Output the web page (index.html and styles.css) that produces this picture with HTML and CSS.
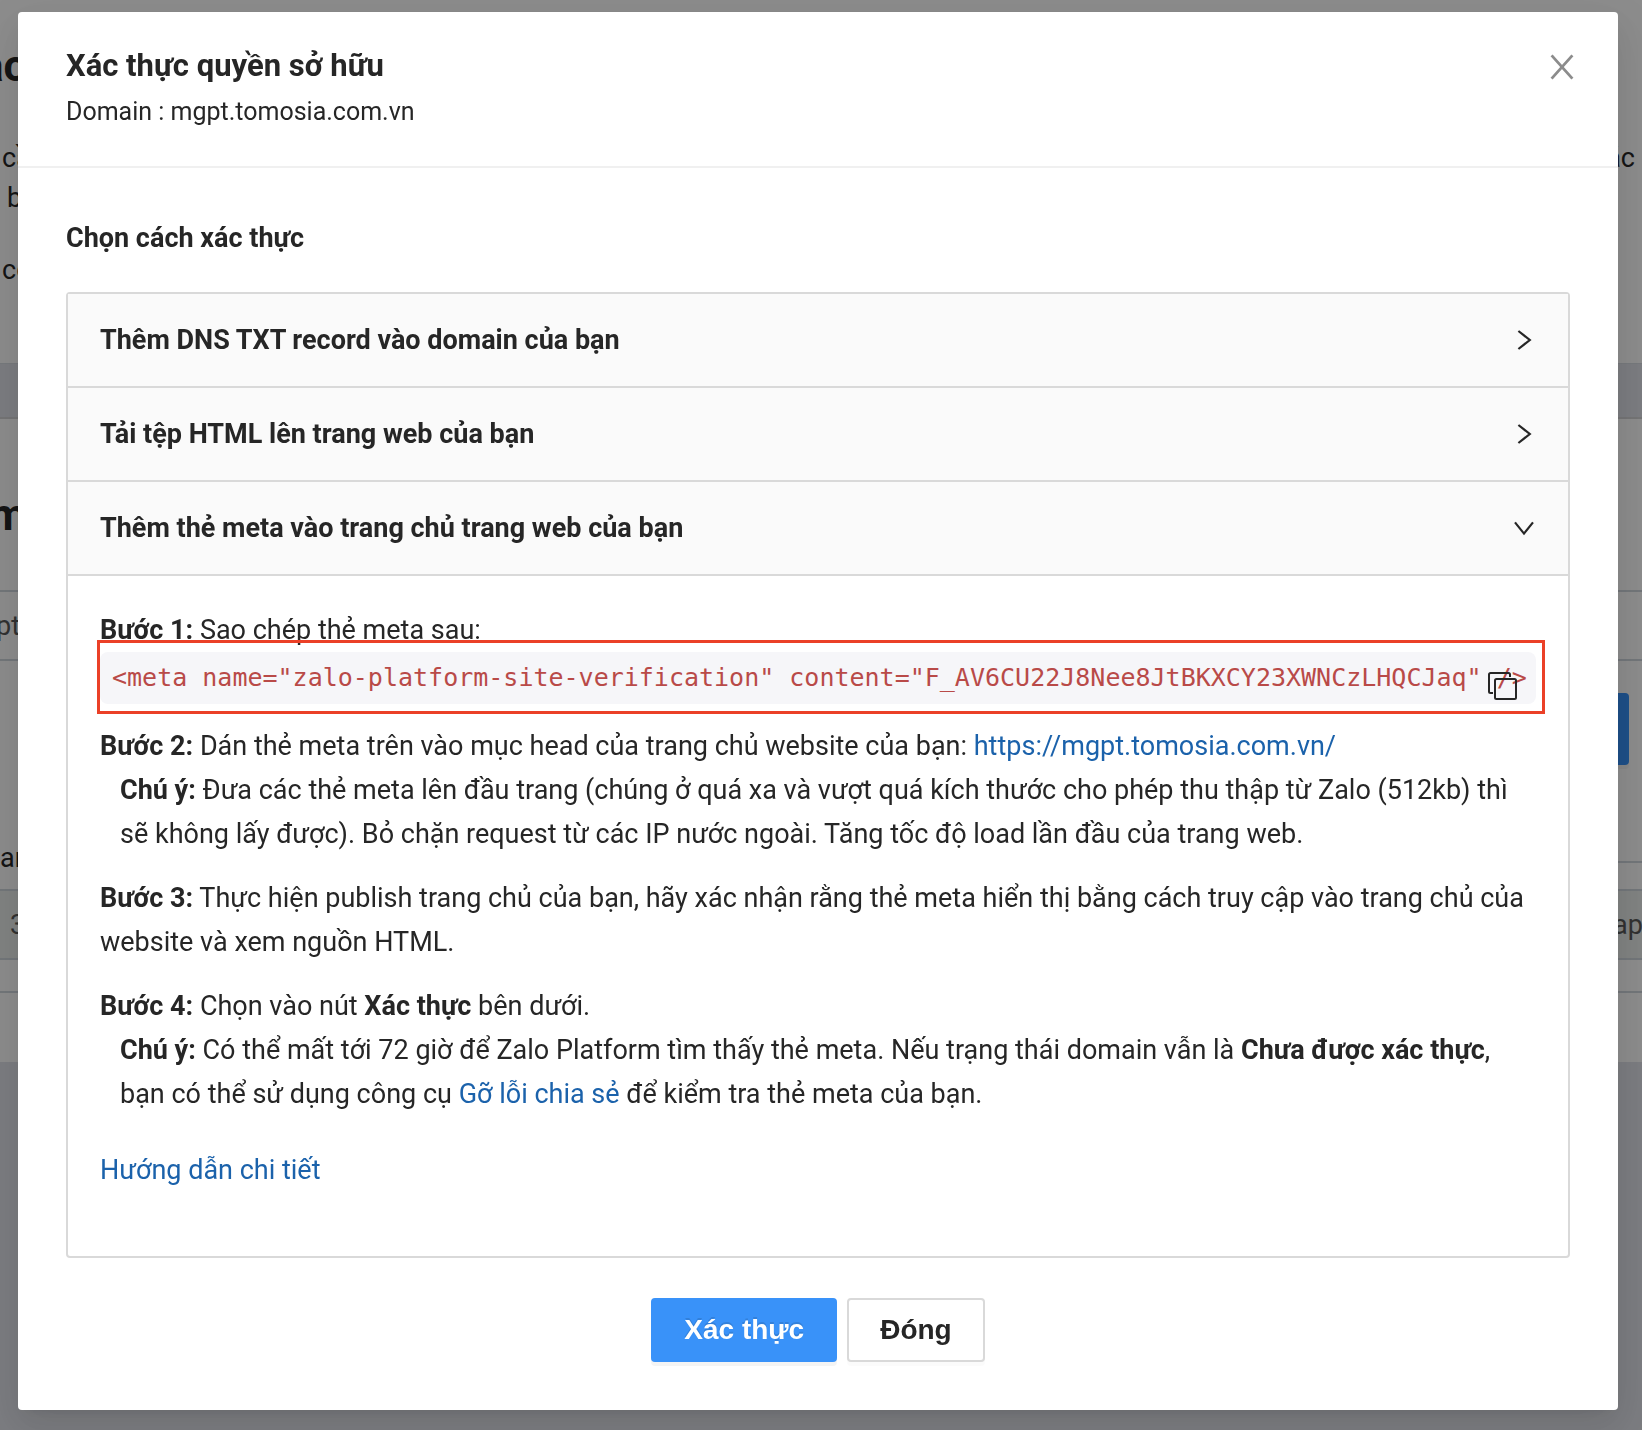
FILE: index.html
```html
<!DOCTYPE html>
<html lang="vi">
<head>
<meta charset="utf-8">
<meta name="viewport" content="width=device-width, initial-scale=1">
<title>Xác thực quyền sở hữu</title>
<link rel="stylesheet" href="styles.css">
</head>
<body>
<div class="page" aria-hidden="true">
  <section class="intro">
    <div class="page-title">ac</div>
    <div class="intro-row"><span>cần</span><span>các</span></div>
    <div class="intro-row intro-row-indent"><span>b</span></div>
    <div class="intro-row intro-row-spaced"><span>co</span></div>
  </section>
  <div class="band"></div>
  <section class="domains">
    <div class="page-title domains-title">m</div>
    <div class="field field-domain">pt</div>
    <div class="action-row"><div class="page-action"></div></div>
    <div class="label-row"><span>an</span><span class="label-rule"></span></div>
    <div class="field field-filled"><span>3</span><span class="field-end">app</span></div>
    <div class="domains-footer"></div>
  </section>
</div>

<div class="mask">
  <div class="modal" role="dialog" aria-modal="true" aria-labelledby="modal-title">
    <header class="modal-header">
      <div>
        <h1 class="modal-title" id="modal-title">Xác thực quyền sở hữu</h1>
        <p class="modal-domain">Domain : mgpt.tomosia.com.vn</p>
      </div>
      <button class="close" type="button" aria-label="Đóng hộp thoại">
        <svg viewBox="0 0 32 32" width="32" height="32" fill="none" stroke="currentColor" stroke-width="2.8"><path d="M5.600 4.400 26.400 27.600M26.400 4.400 5.600 27.600"/></svg>
      </button>
    </header>

    <div class="modal-body">
      <h2 class="section-title">Chọn cách xác thực</h2>

      <div class="collapse">
        <h3 class="collapse-header">
          <button type="button" class="collapse-toggle" aria-expanded="false">Thêm DNS TXT record vào domain của bạn
            <svg viewBox="0 0 24 24" width="24" height="24" fill="none" stroke="currentColor" stroke-width="2.2"><path d="M6.400 3 17.800 12 6.400 21"/></svg>
          </button>
        </h3>
        <h3 class="collapse-header">
          <button type="button" class="collapse-toggle" aria-expanded="false">Tải tệp HTML lên trang web của bạn
            <svg viewBox="0 0 24 24" width="24" height="24" fill="none" stroke="currentColor" stroke-width="2.2"><path d="M6.400 3 17.800 12 6.400 21"/></svg>
          </button>
        </h3>
        <h3 class="collapse-header">
          <button type="button" class="collapse-toggle" aria-expanded="true" aria-controls="meta-panel">Thêm thẻ meta vào trang chủ trang web của bạn
            <svg viewBox="0 0 24 24" width="24" height="24" fill="none" stroke="currentColor" stroke-width="2.2"><path d="M3 6.400 12 17.600 21 6.400"/></svg>
          </button>
        </h3>
        <div class="panel" id="meta-panel">
          <div class="step">
            <p><strong>Bước 1:</strong> Sao chép thẻ meta sau:</p>
            <div class="snippet">
              <code>&lt;meta name="zalo-platform-site-verification" content="F_AV6CU22J8Nee8JtBKXCY23XWNCzLHQCJaq" /&gt;</code>
              <button class="copy" type="button" aria-label="Sao chép">
                <svg viewBox="0 0 32 32" width="32" height="32" fill="none" stroke="currentColor" stroke-width="2"><rect x="9" y="9" width="21" height="20" rx="1.500"/><path d="M7 23H4.500a1.500 1.500 0 0 1-1.500-1.500V4.500A1.500 1.500 0 0 1 4.500 3H22.500A1.500 1.500 0 0 1 24 4.500V7"/></svg>
              </button>
              <span class="highlight"></span>
            </div>
          </div>
          <div class="step">
            <p><strong>Bước 2:</strong> Dán thẻ meta trên vào mục head của trang chủ website của bạn: <a href="https://mgpt.tomosia.com.vn/">https://mgpt.tomosia.com.vn/</a></p>
            <p class="note"><strong>Chú ý:</strong> Đưa các thẻ meta lên đầu trang (chúng ở quá xa và vượt quá kích thước cho phép thu thập từ Zalo (512kb) thì sẽ không lấy được). Bỏ chặn request từ các IP nước ngoài. Tăng tốc độ load lần đầu của trang web.</p>
          </div>
          <div class="step">
            <p><strong>Bước 3:</strong> Thực hiện publish trang chủ của bạn, hãy xác nhận rằng thẻ meta hiển thị bằng cách truy cập vào trang chủ của website và xem nguồn HTML.</p>
          </div>
          <div class="step">
            <p><strong>Bước 4:</strong> Chọn vào nút <strong>Xác thực</strong> bên dưới.</p>
            <p class="note"><strong>Chú ý:</strong> Có thể mất tới 72 giờ để Zalo Platform tìm thấy thẻ meta. Nếu trạng thái domain vẫn là <strong>Chưa được xác thực</strong>, bạn có thể sử dụng công cụ <a href="#debug">Gỡ lỗi chia sẻ</a> để kiểm tra thẻ meta của bạn.</p>
          </div>
          <p class="guide"><a href="#guide">Hướng dẫn chi tiết</a></p>
        </div>
      </div>

      <div class="actions">
        <button class="btn btn-primary" type="button">Xác thực</button>
        <button class="btn" type="button">Đóng</button>
      </div>
    </div>
  </div>
</div>
</body>
</html>
```
FILE: styles.css
```css
* { box-sizing: border-box; }

body,
h1, h2, h3, p { margin: 0; }

body {
  height: 100vh;
  overflow: hidden;
  background: #e1e3ea;
  color: #262626;
  font-family: Roboto, "Liberation Sans", sans-serif;
  font-size: 27px;
  line-height: 44px;
}

button {
  font: inherit;
  color: inherit;
  cursor: pointer;
}

svg { display: block; flex: none; }

a { color: #1b62ab; text-decoration: none; }

/* Page behind the dialog */
.page { line-height: 40px; overflow: hidden; }

.intro {
  padding: 36px 7px 73px 2px;
  background: #fff;
}

.page-title {
  margin: 0 0 42px -22px;
  font-size: 44px;
  font-weight: 700;
  line-height: 60px;
}

.intro-row { display: flex; justify-content: space-between; }
.intro-row-indent { padding-left: 5px; }
.intro-row-spaced { margin-top: 32px; }

.band {
  height: 56px;
  border-top: 1px solid #d8dde3;
  border-bottom: 2px solid #d4d4d6;
}

.domains { padding-top: 66px; background: #fff; }
.domains-title { margin: 0 0 45px -11px; }

.field {
  display: flex;
  justify-content: space-between;
  padding: 14px 0 13px;
  border: solid #d0d7de;
  border-width: 2px 0;
  color: #595959;
}

.field-domain { text-indent: -4px; }
.field-filled { padding-left: 10px; background: #eaeeec; }
.field-end { margin-right: -16px; }

.action-row {
  display: flex;
  justify-content: flex-end;
  padding: 32px 13px 73px;
}

.page-action {
  width: 160px;
  height: 72px;
  border-radius: 4px;
  background: #3691f8;
  box-shadow: 0 4px 0 rgba(0, 0, 0, 0.04);
}

.label-row {
  display: flex;
  justify-content: space-between;
  align-items: flex-end;
  padding-bottom: 11px;
}

.label-rule {
  width: 50%;
  height: 17px;
  border-top: 2px solid #d0d7de;
}

.domains-footer {
  height: 71px;
  margin-top: 31px;
  border-top: 2px solid #d0d7de;
}

/* Dialog */
.mask {
  position: fixed;
  inset: 0;
  overflow: auto;
  padding: 12px 24px 20px 18px;
  background: rgba(0, 0, 0, 0.45);
}

.modal {
  border-radius: 4px;
  background: #fff;
  box-shadow:
    0 6px 12px -8px rgba(0, 0, 0, 0.12),
    0 12px 32px rgba(0, 0, 0, 0.08),
    0 18px 56px 16px rgba(0, 0, 0, 0.05);
}

.modal-header {
  display: flex;
  justify-content: space-between;
  align-items: flex-start;
  padding: 32px 40px 30px 48px;
  border-bottom: 2px solid #f0f0f0;
}

.modal-title { font-size: 31px; font-weight: 700; line-height: 44px; }
.modal-domain { font-size: 25px; line-height: 48px; }

.close {
  display: flex;
  align-items: center;
  height: 46px;
  padding: 0;
  border: 0;
  background: none;
  color: #8c8c8c;
}

.modal-body { padding: 48px; }

.section-title {
  margin-bottom: 32px;
  font-size: 27px;
  font-weight: 700;
}

.collapse {
  border: 2px solid #d9d9d9;
  border-radius: 4px;
}

.collapse-header {
  border-bottom: 2px solid #d9d9d9;
  background: #fafafa;
  font-size: 27px;
  font-weight: 700;
}

.collapse-toggle {
  display: flex;
  justify-content: space-between;
  align-items: center;
  width: 100%;
  padding: 24px 32px;
  border: 0;
  background: none;
  text-align: left;
}

.panel { padding: 32px 32px 64px; }

.step { margin-bottom: 20px; }
.note { padding-left: 20px; }
.guide { margin-top: 32px; }

.snippet {
  position: relative;
  padding: 0 12px;
  border-radius: 8px;
  background: #f6f6f9;
  color: #b94a48;
}

.snippet code {
  display: block;
  font-family: "DejaVu Sans Mono", "Liberation Mono", monospace;
  font-size: 25px;
  line-height: 52px;
  white-space: nowrap;
}

.copy {
  position: absolute;
  right: 18px;
  bottom: 2px;
  padding: 0;
  border: 0;
  background: none;
  color: #262626;
}

.highlight {
  position: absolute;
  inset: -12px -9px -10px -3px;
  border: 3px solid #eb4027;
  pointer-events: none;
}

.actions {
  display: flex;
  justify-content: center;
  gap: 10px;
  margin-top: 40px;
}

.btn {
  height: 64px;
  padding: 0 31px;
  border: 2px solid #d9d9d9;
  border-radius: 4px;
  background: #fff;
  box-shadow: 0 4px 0 rgba(0, 0, 0, 0.016);
  font-family: "Liberation Sans", Arial, sans-serif;
  font-size: 28px;
  font-weight: 700;
}

.btn-primary {
  border-color: #3992f9;
  background: #3992f9;
  box-shadow: 0 4px 0 rgba(0, 0, 0, 0.045);
  color: #fff;
  text-shadow: 0 -2px 0 rgba(0, 0, 0, 0.12);
}
```
